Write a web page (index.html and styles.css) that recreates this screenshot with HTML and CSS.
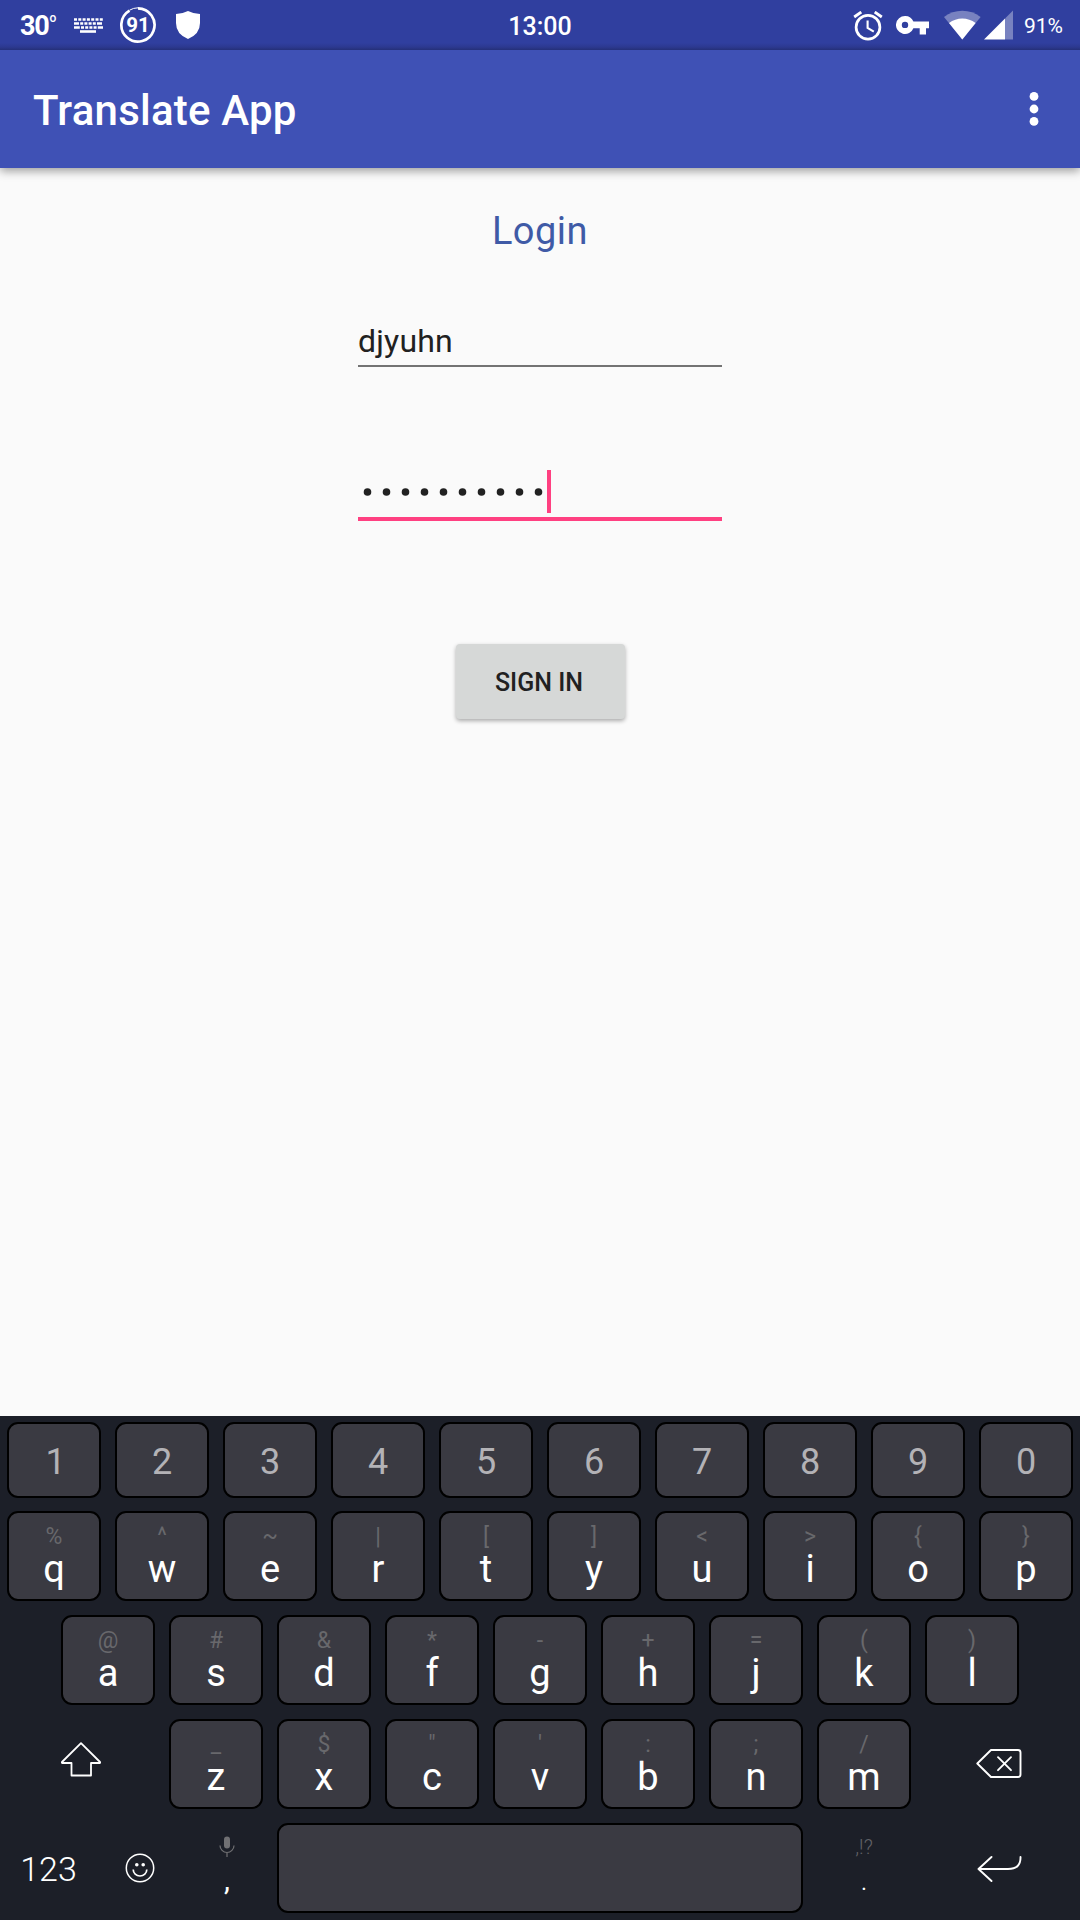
FILE: index.html
```html
<!DOCTYPE html>
<html lang="en">
<head>
<meta charset="utf-8">
<title>Translate App</title>
<link rel="stylesheet" href="styles.css">
</head>
<body>
<div class="screen">
  <header class="status">
    <div class="status-left">
      <span class="temp">30<span class="degree">o</span></span>
      <svg class="i-keyboard" width="29" height="15" viewBox="0 0 29 15" fill="none" stroke="#fff"><path d="M0 1.5h29" stroke-width="2.6" stroke-dasharray="3 1.3"/><path d="M0 5.5h29" stroke-width="2.4" stroke-dasharray="5 1.2 3 1.2 3 1.2 3 1.2 3 1.2"/><path d="M0 9.5h29" stroke-width="2.4" stroke-dasharray="5.8 1.2 3 1.2 3 1.2 3 1.2 3 1.2"/><path d="M6 13.5h16" stroke-width="2.6"/></svg>
      <span class="battery-ring"><svg width="38" height="38" viewBox="0 0 38 38" fill="none" stroke="#fff"><path d="M19 2.4A16.6 16.6 0 1 1 10.5 4.7" stroke-width="2.7"/><path d="M10.5 4.2A17 17 0 0 1 19 1.8" stroke-width="1"/></svg><span class="ring-value">91</span></span>
      <svg class="i-shield" width="24" height="28" viewBox="0 0 24 28" fill="#fff"><path d="M12 0Q18 3 24 3V12Q24 23 12 28Q0 23 0 12V3Q6 3 12 0Z"/></svg>
    </div>
    <span class="clock">13:00</span>
    <div class="status-right">
      <svg class="i-alarm" width="30" height="30" viewBox="0 0 30 30" fill="none" stroke="#fff"><circle cx="15" cy="16.2" r="11.9" stroke-width="2.7"/><path d="M1.2 6L8.3 1M28.8 6L21.7 1" stroke-width="2.8"/><path d="M14.6 9.5V17L20.8 20.7" stroke-width="2.1"/></svg>
      <svg class="i-key" width="33" height="19" viewBox="0 0 33 19" fill="#fff"><path fill-rule="evenodd" d="M9 0A9 9 0 0 1 17.4 5.6H33V12.2H30V18.5H23.7V12.2H17.4A9 9 0 1 1 9 0ZM9 5.7A3.2 3.2 0 1 0 9 12.1A3.2 3.2 0 1 0 9 5.7Z"/></svg>
      <svg class="i-wifi" width="38" height="30" viewBox="0 0 38 30" fill="#fff"><path opacity=".35" d="M0 7Q8 .8 18.3 .8T36.6 7L18.3 29.5Z"/><path d="M5 13Q11 8.4 18.3 8.4T31.6 13L18.3 29.5Z"/></svg>
      <svg class="i-signal" width="29" height="30" viewBox="0 0 29 30" fill="#fff"><path opacity=".35" d="M21 8.4L29 .4V29.4H21Z"/><path d="M0 29.4L21 8.4V29.4Z"/></svg>
      <span class="battery">91%</span>
    </div>
  </header>

  <div class="appbar">
    <h1 class="app-title">Translate App</h1>
    <svg width="10" height="36" viewBox="0 0 10 36" fill="#fff"><circle cx="5" cy="5.4" r="4.4"/><circle cx="5" cy="18" r="4.4"/><circle cx="5" cy="30.4" r="4.4"/></svg>
  </div>

  <main class="content">
    <h2 class="heading">Login</h2>
    <div class="field">djyuhn</div>
    <div class="field field-active">
      <svg width="189" height="12" viewBox="0 0 189 12" fill="#212121"><circle cx="9.5" cy="6" r="3.8"/><circle cx="28.5" cy="6" r="3.8"/><circle cx="47.5" cy="6" r="3.8"/><circle cx="66.5" cy="6" r="3.8"/><circle cx="85.5" cy="6" r="3.8"/><circle cx="104.5" cy="6" r="3.8"/><circle cx="123.5" cy="6" r="3.8"/><circle cx="142.5" cy="6" r="3.8"/><circle cx="161.5" cy="6" r="3.8"/><circle cx="180.5" cy="6" r="3.8"/></svg>
      <span class="caret"></span>
    </div>
    <button class="signin">SIGN IN</button>
  </main>

  <div class="keyboard">
    <div class="row row-numbers">
      <div class="key one">1</div><div class="key">2</div><div class="key">3</div><div class="key">4</div><div class="key">5</div><div class="key">6</div><div class="key">7</div><div class="key">8</div><div class="key">9</div><div class="key">0</div>
    </div>
    <div class="row">
      <div class="key"><small>%</small>q</div><div class="key"><small>^</small>w</div><div class="key"><small>~</small>e</div><div class="key"><small>|</small>r</div><div class="key"><small>[</small>t</div><div class="key"><small>]</small>y</div><div class="key"><small>&lt;</small>u</div><div class="key"><small>&gt;</small>i</div><div class="key"><small>{</small>o</div><div class="key"><small>}</small>p</div>
    </div>
    <div class="row">
      <div class="key"><small>@</small>a</div><div class="key"><small>#</small>s</div><div class="key"><small>&amp;</small>d</div><div class="key"><small>*</small>f</div><div class="key"><small>-</small>g</div><div class="key"><small>+</small>h</div><div class="key"><small>=</small>j</div><div class="key"><small>(</small>k</div><div class="key"><small>)</small>l</div>
    </div>
    <div class="row">
      <div class="plain wide shift"><svg width="42" height="38" viewBox="0 0 42 38" fill="none" stroke="#fff" stroke-width="1.8" stroke-linejoin="round"><path d="M21 2.2L40 21Q40.5 22 39.5 22H31V34.5H11.5V22H2.5Q1.5 22 2 21Z"/></svg></div>
      <div class="key"><small>_</small>z</div><div class="key"><small>$</small>x</div><div class="key"><small>"</small>c</div><div class="key"><small>'</small>v</div><div class="key"><small>:</small>b</div><div class="key"><small>;</small>n</div><div class="key"><small>/</small>m</div>
      <div class="plain wide"><svg width="46" height="32" viewBox="0 0 46 32" fill="none" stroke="#fff" stroke-width="1.9" stroke-linejoin="round" stroke-linecap="round"><path d="M15 2H42Q44.5 2 44.5 4.5V26.5Q44.5 29 42 29H15L1.3 15.5Z"/><path d="M22 9.2L35 22.2M35 9.2L22 22.2"/></svg></div>
    </div>
    <div class="row row-bottom">
      <div class="plain mode">123</div>
      <div class="plain"><svg width="30" height="30" viewBox="0 0 30 30" fill="none" stroke="#fff" stroke-width="1.5"><circle cx="15" cy="15" r="13.7"/><circle cx="11.8" cy="11.7" r="1.8" fill="#fff" stroke="none"/><circle cx="18.2" cy="11.7" r="1.8" fill="#fff" stroke="none"/><path d="M8.2 16.5A6.8 6.5 0 0 0 21.8 16.5" stroke-width="1.7"/></svg></div>
      <div class="plain comma"><svg width="16" height="22" viewBox="0 0 16 22" fill="none" stroke="#707073"><rect x="5" y="0.5" width="6" height="12" rx="3" fill="#707073" stroke="none"/><path d="M1 9.5A7 7 0 0 0 15 9.5M8 16.5V21" stroke-width="1.2"/></svg><span>,</span></div>
      <div class="key space"></div>
      <div class="plain period"><small>,!?</small><span>.</span></div>
      <div class="plain enter"><svg width="46" height="28" viewBox="0 0 46 28" fill="none" stroke="#fff" stroke-width="1.9" stroke-linecap="round" stroke-linejoin="round"><path d="M14.5 2L1.5 14L14.5 26M1.5 14H31Q44 14 43.5 2"/></svg></div>
    </div>
  </div>
</div>
</body>
</html>
```
FILE: styles.css
```css
* { box-sizing: border-box; }

body {
  margin: 0;
  font-family: Roboto, "Liberation Sans", sans-serif;
}

svg { display: block; flex: none; }

.screen {
  width: 1080px;
  height: 1920px;
  display: flex;
  flex-direction: column;
  background: #fafafa;
  overflow: hidden;
}

/* System status bar */
.status {
  height: 50px;
  flex: none;
  display: grid;
  grid-template-columns: 1fr auto 1fr;
  background: linear-gradient(#303f9f 43px, #2c3990 47px, #253079);
  color: #fff;
}

.status-left, .status-right {
  display: flex;
  align-items: flex-start;
}

.status-left { padding-left: 20px; }
.status-right { justify-content: flex-end; padding-right: 17px; }

.temp {
  width: 54px;
  font-weight: 700;
  font-size: 27px;
  line-height: 52px;
  white-space: nowrap;
  letter-spacing: -1.2px;
}

.degree {
  font-size: 12px;
  font-weight: 500;
  vertical-align: 13px;
  line-height: 1;
  margin-left: 1px;
}

.i-keyboard { margin-top: 18px; }

.battery-ring {
  display: grid;
  place-items: center;
  margin: 6px 0 0 16px;
}

.battery-ring > * { grid-area: 1 / 1; }

.ring-value {
  font-size: 20.5px;
  font-weight: 700;
  line-height: 38px;
}

.i-shield { margin: 11px 0 0 19px; }

.clock {
  font-size: 25px;
  font-weight: 500;
  line-height: 54px;
}

.i-alarm { margin-top: 10.5px; }
.i-key { margin: 15.5px 0 0 13px; }
.i-wifi { margin: 9.5px 0 0 15px; }
.i-signal { margin: 9.5px 0 0 2px; }

.battery {
  margin-left: 11px;
  font-size: 21px;
  line-height: 52px;
}

/* App bar */
.appbar {
  height: 118px;
  flex: none;
  display: flex;
  align-items: center;
  justify-content: space-between;
  padding: 0 41px 0 33px;
  background: #3f51b5;
  color: #fff;
  box-shadow: 0 3px 9px rgba(0, 0, 0, .38);
  clip-path: inset(0 0 -20px 0);
}

.app-title {
  margin: 3px 0 0;
  font-size: 42px;
  font-weight: 500;
  line-height: 50px;
  letter-spacing: .22px;
}

/* Login form */
.content {
  flex: 1;
  display: flex;
  flex-direction: column;
  align-items: center;
}

.heading {
  margin: 38px 0 0;
  font-size: 38px;
  font-weight: 400;
  line-height: 50px;
  letter-spacing: .5px;
  color: #3f5aa6;
}

.field {
  width: 364px;
  height: 51px;
  margin-top: 60px;
  font-size: 32px;
  line-height: 50px;
  letter-spacing: .2px;
  color: #212121;
  border-bottom: 2px solid #737373;
}

.field-active {
  height: 51px;
  margin-top: 103px;
  display: flex;
  align-items: flex-start;
  border-bottom: 4px solid #ff4081;
}

.field-active svg { margin-top: 16px; }

.caret {
  width: 4px;
  height: 43px;
  background: #ff4081;
}

.signin {
  width: 169px;
  height: 75px;
  margin: 123px 0 0;
  padding: 3px 2px 0 0;
  border: 0;
  border-radius: 4px;
  background: #d6d8d7;
  color: #212121;
  font: 500 25px/30px Roboto, "Liberation Sans", sans-serif;
  box-shadow: 0 2px 4px rgba(0, 0, 0, .32);
}

/* On-screen keyboard */
.keyboard {
  height: 504px;
  flex: none;
  padding-top: 6px;
  display: flex;
  flex-direction: column;
  gap: 14px;
  background: #1c1f28;
  color: #fff;
}

.row {
  height: 90px;
  display: flex;
  justify-content: center;
}

.key {
  width: 94px;
  height: 100%;
  margin: 0 7px;
  padding-top: 12px;
  border: 2px solid #000;
  border-radius: 11px;
  background: #3a3a42;
  font-size: 38px;
  line-height: 40px;
  text-align: center;
}

.key small {
  display: block;
  font-size: 23px;
  font-weight: 400;
  line-height: 24px;
  color: #68686c;
}

.row-numbers { height: 76px; margin-bottom: -1px; }

.row-numbers .key {
  padding-top: 2px;
  font-size: 36px;
  line-height: 72px;
  color: #b3b2b6;
}

.row-numbers .one { padding-left: 3px; }

.plain {
  display: flex;
  flex-direction: column;
  align-items: center;
  justify-content: center;
}

.wide { width: 162px; }
.shift { padding-bottom: 8px; }
.enter { padding: 2px 0 0 1px; }

.row-bottom {
  display: grid;
  grid-template-columns: 98px 84px 88px 540px 108px 162px;
}

.space { width: 526px; }

.mode {
  font-size: 34px;
  font-weight: 300;
  padding: 1px 1px 0 0;
}

.comma, .period { justify-content: flex-start; }

.comma svg { margin: 13px 0 0 1px; }

.comma span {
  font-size: 30px;
  line-height: 32px;
  margin: 6px 0 0 2px;
}

.period small {
  margin-top: 12px;
  font-size: 20px;
  font-weight: 300;
  line-height: 24px;
  color: #626267;
}

.period span {
  font-size: 30px;
  font-weight: 300;
  line-height: 30px;
  margin-top: 6px;
}
```
